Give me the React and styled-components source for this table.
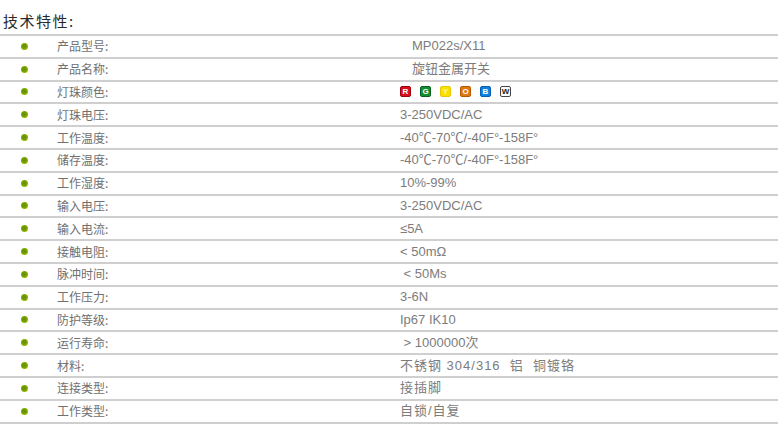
import React from 'react';
import styled, { createGlobalStyle } from 'styled-components';

const GlobalStyle = createGlobalStyle`
  body {
    margin: 0;
    background: #fff;
    font-family: "Liberation Sans", "Noto Sans CJK SC", sans-serif;
  }
`;

const Page = styled.div`
  width: 780px;
  height: 441px;
  overflow: hidden;
  background: #fff;
`;

const Title = styled.h2`
  margin: 0;
  height: 34px;
  padding: 10px 0 0 3px;
  box-sizing: border-box;
  font-size: 15px;
  font-weight: normal;
  letter-spacing: 1.5px;
  color: #2a2a2a;
  font-family: "Noto Sans CJK SC", sans-serif;
  line-height: 22px;
`;

const Table = styled.div`
  width: 778px;
  border-top: 2px solid #cfcfcf;
`;

const Row = styled.div`
  display: grid;
  grid-template-columns: 57px 343px 1fr;
  align-items: center;
  height: 20.8px;
  border-bottom: 2px solid #cfcfcf;
`;

const Bullet = styled.span`
  justify-self: start;
  margin-left: 21px;
  width: 7px;
  height: 7px;
  border-radius: 50%;
  background: radial-gradient(circle at 45% 45%, #5d8a00 0%, #7fa800 55%, #d8ec20 100%);
`;

const Label = styled.span`
  font-family: "Noto Sans CJK SC", sans-serif;
  font-size: 12px;
  color: #707070;
  line-height: 20px;
`;

const Value = styled.span`
  padding-left: ${({ $indent }) => $indent || 0}px;
  font-size: 13px;
  letter-spacing: ${({ $spaced }) => ($spaced ? '1px' : '0')};
  color: #7c7c7c;
  line-height: 20px;
  white-space: pre;
`;

const Swatches = styled.div`
  display: flex;
  gap: 9px;
  align-items: center;
`;

const Swatch = styled.span`
  width: 11px;
  height: 11px;
  border-radius: 2px;
  box-sizing: border-box;
  display: flex;
  align-items: center;
  justify-content: center;
  font-size: 8px;
  font-weight: bold;
  line-height: 1;
  background: ${({ $bg }) => $bg};
  color: ${({ $fg }) => $fg || '#fff'};
  border: 1px solid ${({ $edge }) => $edge || 'transparent'};
`;

const colors = [
  { t: 'R', bg: '#d8101c', edge: '#a00010' },
  { t: 'G', bg: '#109030', edge: '#0a6020' },
  { t: 'Y', bg: '#f8e000', fg: '#fff6a0', edge: '#e8c800' },
  { t: 'O', bg: '#e07810', edge: '#b85800' },
  { t: 'B', bg: '#1080e0', edge: '#0860b0' },
  { t: 'W', bg: '#fff', fg: '#222', edge: '#444' },
];

const rows = [
  ['产品型号:', 'MP022s/X11', 12],
  ['产品名称:', '旋钮金属开关', 12],
  ['灯珠颜色:', 'colors'],
  ['灯珠电压:', '3-250VDC/AC'],
  ['工作温度:', '-40℃-70℃/-40F°-158F°'],
  ['储存温度:', '-40℃-70℃/-40F°-158F°'],
  ['工作湿度:', '10%-99%'],
  ['输入电压:', '3-250VDC/AC'],
  ['输入电流:', '≤5A'],
  ['接触电阻:', '< 50mΩ'],
  ['脉冲时间:', ' < 50Ms'],
  ['工作压力:', '3-6N'],
  ['防护等级:', 'Ip67 IK10'],
  ['运行寿命:', ' > 1000000次'],
  ['材料:', '不锈钢 304/316  铝  铜镀铬', 0, true],
  ['连接类型:', '接插脚', 0, true],
  ['工作类型:', '自锁/自复', 0, true],
];

export default function App() {
  return (
    <Page>
      <GlobalStyle />
      <Title>技术特性:</Title>
      <Table>
        {rows.map(([label, value, indent, spaced]) => (
          <Row key={label}>
            <Bullet />
            <Label>{label}</Label>
            {value === 'colors' ? (
              <Swatches>
                {colors.map((c) => (
                  <Swatch key={c.t} $bg={c.bg} $fg={c.fg} $edge={c.edge}>
                    {c.t}
                  </Swatch>
                ))}
              </Swatches>
            ) : (
              <Value $indent={indent} $spaced={spaced}>
                {value}
              </Value>
            )}
          </Row>
        ))}
      </Table>
    </Page>
  );
}
